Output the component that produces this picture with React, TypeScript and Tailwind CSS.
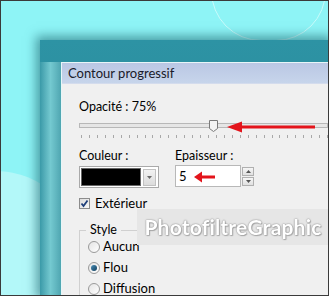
import React from 'react'

const font = { fontFamily: 'Lato, "Noto Sans", sans-serif' }

function RedArrow({ width, head = 14 }: { width: number; head?: number }) {
  return (
    <svg width={width} height={12} viewBox={`0 0 ${width} 12`}>
      <rect x={head - 2} y={4.5} width={width - head + 2} height={3} fill="#e3141b" />
      <polygon points={`0,6 ${head},0.5 ${head},11.5`} fill="#e3141b" />
    </svg>
  )
}

function Radio({ label, checked = false }: { label: string; checked?: boolean }) {
  return (
    <div className="flex items-center gap-[3px] h-[21px]">
      <span className="w-[12px] h-[12px] rounded-full border border-[#9a9a9a] bg-gradient-to-br from-[#e4e4e4] to-[#ffffff] flex items-center justify-center">
        {checked && (
          <span className="w-[6px] h-[6px] rounded-full bg-gradient-to-br from-[#4a8fb8] to-[#113e5c]" />
        )}
      </span>
      <span className="text-[13px] text-black leading-none">{label}</span>
    </div>
  )
}

export default function App() {
  const ticks = Array.from({ length: 32 })
  return (
    <div
      className="relative w-[329px] h-[296px] overflow-hidden bg-[#8ef4f6] border border-[#3a3a3a]"
      style={font}>
      {/* desktop decorations */}
      <div className="absolute -left-[90px] top-[170px] w-[170px] h-[170px] rounded-full bg-[#b3f8f9]" />
      <div className="absolute left-[210px] -top-[60px] w-[115px] h-[100px] rounded-full border border-[#c9fbfb]" />

      {/* window frame */}
      <div className="absolute left-[39px] top-[39px] right-0 bottom-0 flex flex-col pl-[21px] pt-[22px] pb-[2px] bg-gradient-to-b from-[#2d93a4] via-[#2a8c9d] to-[#2a8898] shadow-[0_0_10px_4px_rgba(20,90,100,0.55)]">
        <div className="absolute left-0 top-[22px] bottom-0 w-[21px] bg-gradient-to-r from-[#3a9aa8] via-[#74c9d0] to-[#4fa6b1]" />
        <div className="relative flex flex-col flex-1 border-t border-l border-[#e8f6f8]">
          <div className="h-[21px] flex items-center pl-[6px] bg-gradient-to-b from-[#bac7e4] to-[#c7d5eb] border-b border-[#d4dced]">
            <span className="text-[13px] text-[#1a1a2a] leading-none">Contour progressif</span>
          </div>
          <div className="flex-1 bg-[#f0f0f0] pl-[17px] pt-[17px] relative">
            <div className="text-[12.5px] leading-none text-black">Opacité : 75%</div>

            {/* slider */}
            <div className="relative mt-[6px] h-[14px]">
              <div className="absolute left-0 right-0 top-[3px] h-[5px] border border-[#b8b8b8] bg-[#e6e6e6]" />
              <svg className="absolute left-[130px] top-0" width="9" height="12" viewBox="0 0 9 12">
                <path d="M0.5,0.5 H8.5 V8.5 L4.5,11.5 L0.5,8.5 Z" fill="#f4f4f4" stroke="#7a7a7a" />
              </svg>
              <div className="absolute left-[148px] top-[1px]">
                <RedArrow width={88} head={15} />
              </div>
            </div>
            <div className="flex gap-[7px] mt-[1px] pl-[2px] h-[3px]">
              {ticks.map((_, i) => (
                <span key={i} className="w-px h-[3px] bg-[#a8a8a8]" />
              ))}
            </div>

            {/* colour + thickness */}
            <div className="flex mt-[12px]">
              <div className="w-[96px]">
                <div className="text-[12.5px] leading-none text-black">Couleur :</div>
                <div className="mt-[4px] w-[80px] h-[22px] border border-[#a9a9a9] bg-white p-[1px] flex items-center gap-[2px]">
                  <div className="w-[60px] h-[18px] bg-black border border-[#666]" />
                  <div className="w-[13px] h-[17px] border border-[#c2c2c2] bg-gradient-to-b from-[#f2f2f2] to-[#dcdcdc] flex items-center justify-center">
                    <svg width="5" height="3" viewBox="0 0 5 3">
                      <polygon points="0,0 5,0 2.5,3" fill="#6a6a6a" />
                    </svg>
                  </div>
                </div>
              </div>
              <div>
                <div className="text-[12.5px] leading-none text-black">Epaisseur :</div>
                <div className="mt-[3px] flex items-center">
                  <div className="relative w-[66px] h-[22px] border border-[#b8b8b8] bg-white flex items-center pl-[3px]">
                    <span className="text-[13px] leading-none text-black">5</span>
                    <div className="absolute left-[18px] top-[5px]">
                      <RedArrow width={21} head={8} />
                    </div>
                  </div>
                  <div className="flex flex-col gap-px ml-px">
                    <div className="w-[12px] h-[9px] border border-[#b0b0b0] bg-gradient-to-b from-[#f6f6f6] to-[#e0e0e0] flex items-center justify-center">
                      <svg width="5" height="3" viewBox="0 0 5 3">
                        <polygon points="0,3 5,3 2.5,0" fill="#555" />
                      </svg>
                    </div>
                    <div className="w-[12px] h-[9px] border border-[#b0b0b0] bg-gradient-to-b from-[#f6f6f6] to-[#e0e0e0] flex items-center justify-center">
                      <svg width="5" height="3" viewBox="0 0 5 3">
                        <polygon points="0,0 5,0 2.5,3" fill="#555" />
                      </svg>
                    </div>
                  </div>
                </div>
              </div>
            </div>

            {/* checkbox */}
            <div className="flex items-center gap-[5px] mt-[9px]">
              <span className="w-[11px] h-[11px] border border-[#8c8c8c] bg-gradient-to-br from-[#dcdcdc] to-[#f8f8f8] flex items-center justify-center">
                <svg width="9" height="9" viewBox="0 0 9 9">
                  <path d="M1.5,4.5 L3.5,7 L7.5,1.5" fill="none" stroke="#1f3f7a" strokeWidth="1.8" />
                </svg>
              </span>
              <span className="text-[13px] leading-none text-black">Extérieur</span>
            </div>

            {/* style group */}
            <div className="relative mt-[20px] border-l border-t border-[#d0d0d0] pl-[8px] pt-[5px]">
              <span className="absolute left-[6px] -top-[7px] px-[4px] bg-[#f0f0f0] text-[12.5px] leading-none text-black">
                Style
              </span>
              <Radio label="Aucun" />
              <Radio label="Flou" checked />
              <Radio label="Diffusion" />
            </div>

            {/* watermark */}
            <div className="absolute left-[75px] top-[125px] w-[192px] h-[36px] bg-[#e6e6e6] blur-[0.5px] flex items-center justify-center">
              <span
                className="text-[21px] font-bold text-white tracking-[0.2px]"
                style={{ textShadow: '0 0 1px #8a8a8a, 0 0 2px #9a9a9a, 1px 1px 1px #b0b0b0' }}>
                PhotofiltreGraphic
              </span>
            </div>
          </div>
        </div>
      </div>
    </div>
  )
}
